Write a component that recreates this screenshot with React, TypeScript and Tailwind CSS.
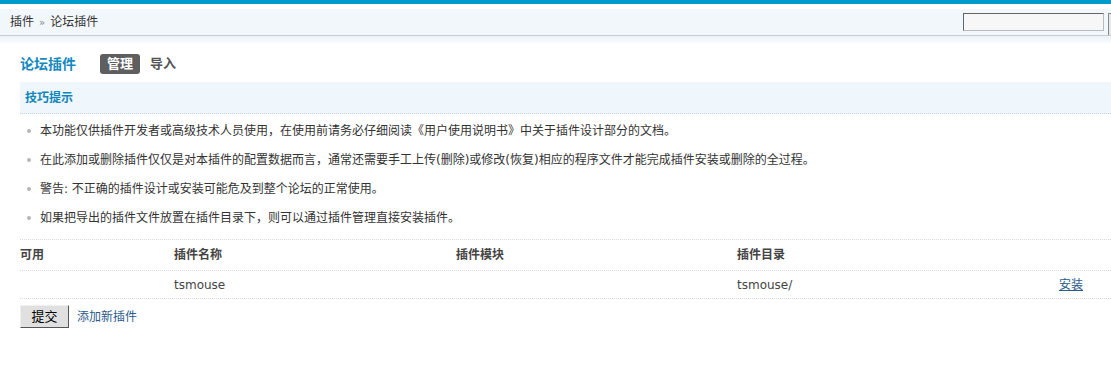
const tips = [
  '本功能仅供插件开发者或高级技术人员使用，在使用前请务必仔细阅读《用户使用说明书》中关于插件设计部分的文档。',
  '在此添加或删除插件仅仅是对本插件的配置数据而言，通常还需要手工上传(删除)或修改(恢复)相应的程序文件才能完成插件安装或删除的全过程。',
  '警告: 不正确的插件设计或安装可能危及到整个论坛的正常使用。',
  '如果把导出的插件文件放置在插件目录下，则可以通过插件管理直接安装插件。',
];

export default function App() {
  return (
    <div className="w-[1111px] h-[365px] overflow-hidden bg-white text-[12px] text-[#333] font-['DejaVu_Sans','Noto_Sans_CJK_SC',sans-serif]">
      {/* top bar */}
      <div className="h-1 bg-[#0099cc]" />
      <div className="h-[5px] bg-white" />
      <div className="h-[27px] bg-[#f2f7fb] border-b border-[#c3cbd0] flex pl-[10px]">
        <div className="flex items-center">
          <span>插件</span>
          <span className="mx-[5px] text-[10px] text-[#888]">»</span>
          <span>论坛插件</span>
        </div>
        <div className="ml-auto flex items-start gap-[4px] pt-[4px]">
          <div className="w-[141px] h-[18px] bg-[#f7f7f7] border border-t-[#666] border-l-[#666] border-b-[#bbb] border-r-[#bbb]" />
          <div className="w-[3px] h-[22px] border-l border-t border-[#888] bg-[#e8e8e8]" />
        </div>
      </div>
      <div className="h-[9px] bg-gradient-to-b from-[#eaf2f8] to-white" />

      <div className="pl-5">
        {/* title row */}
        <div className="flex items-center h-[20px] mt-[9px]">
          <h1 className="text-[14px] font-bold text-[#1589bf] w-[80px]">论坛插件</h1>
          <span className="bg-[#5f5f5f] text-white font-bold text-[13px] rounded-[3px] px-[7px] h-[20px] leading-[20px]">管理</span>
          <span className="ml-[10px] font-bold text-[13px] text-[#555]">导入</span>
        </div>

        {/* tips */}
        <div className="mt-[8px] h-[32px] bg-[#eff6fc] border-b border-dotted border-[#c8d4dc] flex items-center pl-[5px]">
          <span className="font-bold text-[#0f86b9]">技巧提示</span>
        </div>
        <ul className="pt-[2px] pb-[7px] border-b border-dotted border-[#d3dbe0]">
          {tips.map((t, i) => (
            <li key={i} className="flex items-center h-[29px]">
              <span className="w-[4px] h-[4px] rounded-full bg-[#b5b5b5] ml-[7px] mr-[9px]" />
              <span>{t}</span>
            </li>
          ))}
        </ul>

        {/* table */}
        <div className="grid grid-cols-[154px_282px_281px_1fr] h-[31px] items-center border-b border-dotted border-[#d3dbe0] font-bold text-[#444]">
          <div>可用</div>
          <div>插件名称</div>
          <div>插件模块</div>
          <div>插件目录</div>
        </div>
        <div className="grid grid-cols-[154px_282px_281px_1fr] h-[28px] items-center border-b border-dotted border-[#d3dbe0]">
          <div />
          <div className="text-[#444]">tsmouse</div>
          <div />
          <div className="flex items-center text-[#444]">
            <span>tsmouse/</span>
            <a href="#" className="ml-auto mr-[28px] text-[#2b5b8c] underline">安装</a>
          </div>
        </div>

        <div className="flex items-center mt-[6px]">
          <button className="w-[49px] h-[23px] bg-[#e0e0e0] border border-t-[#f0f0f0] border-l-[#f0f0f0] border-r-[#555] border-b-[#555] text-[13px] text-black">提交</button>
          <a href="#" className="ml-2 text-[#2b5b8c]">添加新插件</a>
        </div>
      </div>
    </div>
  );
}
